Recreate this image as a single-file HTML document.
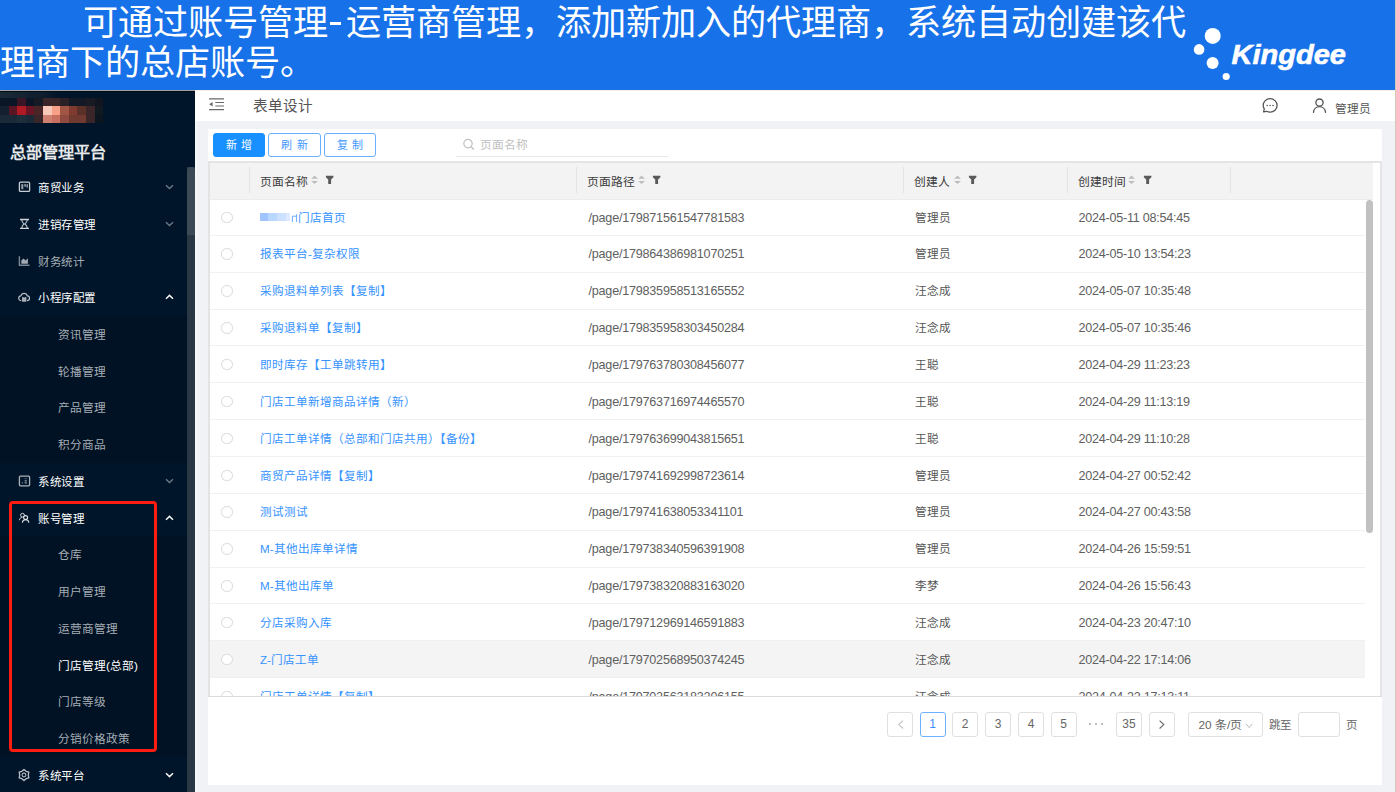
<!DOCTYPE html>
<html lang="zh-CN">
<head>
<meta charset="utf-8">
<style>
*{margin:0;padding:0;box-sizing:border-box}
html,body{width:1396px;height:792px;overflow:hidden;background:#f0f2f5;font-family:"Liberation Sans",sans-serif}
.a{position:absolute}
#banner{position:absolute;left:0;top:0;width:1396px;height:90px;background:#1771e9;overflow:hidden}
.ttl{position:absolute;color:#fff;font-family:"Liberation Serif",serif;font-size:35.2px;line-height:40px;white-space:nowrap}
.hy{display:inline-block;width:17.6px;text-align:left}
#side{position:absolute;left:0;top:90px;width:195px;height:702px;background:#001529;overflow:hidden}
#topbar{position:absolute;left:195px;top:90px;width:1200px;height:31px;background:#fff}
#card{position:absolute;left:208px;top:129px;width:1174px;height:656px;background:#fff}
#redge{position:absolute;left:1395px;top:0;width:1px;height:792px;background:#cfcbb8}
.btn{position:absolute;top:133.3px;height:24px;border-radius:3px;font-size:11px;line-height:23px;text-align:center;letter-spacing:4.5px;text-indent:4.5px}
.mi{position:absolute;left:0;width:187px;height:0;color:#fff;font-size:11.5px}
.mi .t{position:absolute;left:38px;top:-16.9px;line-height:36.75px;white-space:nowrap;letter-spacing:0.5px}
.mi.g .t{color:#a6adb4}
.mi.sub .t{left:58px;color:#a6adb4;top:-17.2px;font-size:11.7px;letter-spacing:0}
.mi.sel .t{color:#fff}
.mi svg{position:absolute}
.subbg{position:absolute;left:0;width:187px;background:#001224}
.th{position:absolute;top:163.5px;height:37px;line-height:37px;font-size:11.8px;color:#3a3a3a;white-space:nowrap}
.row{position:absolute;left:0;width:1155px;height:36.86px;border-bottom:1px solid #f0f0f0}
.c{position:absolute;top:0;line-height:36px;font-size:11.6px;white-space:nowrap;color:#555}
.num{font-size:12.6px;color:#606060}
.lk{color:#3592ff}
.rd{position:absolute;top:12.5px;width:11.5px;height:11.5px;border:1px solid #d9d9d9;border-radius:50%;background:#fff}
.pg{position:absolute;top:711.5px;height:25px;width:26px;border:1px solid #e0e0e0;border-radius:3px;text-align:center;line-height:23.5px;font-size:12px;color:#666;background:#fff}
</style>
</head>
<body>
<div id="banner">
  <div class="ttl" style="left:83px;top:3.7px">可通过账号管理<span class="hy"><span style="display:inline-block;width:10.8px;height:3.6px;background:#fff;vertical-align:9.3px;margin-left:2px"></span></span>运营商管理，添加新加入的代理商，系统自动创建该代</div>
  <div class="ttl" style="left:0;top:43.7px">理商下的总店账号。</div>
  <svg class="a" style="left:1180px;top:20px" width="200" height="66" viewBox="1180 20 200 66">
    <circle cx="1212.7" cy="35.9" r="8" fill="#fff"/><circle cx="1199.1" cy="49.4" r="5.3" fill="#fff"/><circle cx="1212.6" cy="63" r="6" fill="#fff"/><circle cx="1226.2" cy="76.5" r="3.6" fill="#fff"/>
    <text x="1231.5" y="63.6" font-family="Liberation Sans" font-weight="bold" font-style="italic" font-size="27.4" fill="#fff" stroke="#fff" stroke-width="0.6" textLength="114.5" lengthAdjust="spacingAndGlyphs">Kingdee</text>
  </svg>
</div>

<div id="side">
<div class="subbg" style="top:225.6px;height:147px"></div>
<div class="subbg" style="top:446.1px;height:220.5px"></div>
<div class="mi" style="top:97.00px"><div class="t">商贸业务</div><svg width="13" height="12" viewBox="0 0 13 12" style="left:18px;top:-6px"><rect x="1.4" y="1.2" width="10.2" height="9.2" rx="1" fill="none" stroke="#c8ccd2" stroke-width="1.3"/><rect x="3.3" y="3.2" width="2" height="5" fill="#9aa3ad"/><rect x="6.5" y="3.2" width="1.1" height="2.4" fill="#e8eaec"/><rect x="8.6" y="3.2" width="1.1" height="3.4" fill="#c8ccd2"/></svg><svg width="9" height="6" viewBox="0 0 9 6" style="left:164.5px;top:-3px"><path d="M1 1.2L4.5 4.6L8 1.2" fill="none" stroke="#6b7886" stroke-width="1.4"/></svg></div>
<div class="mi" style="top:133.75px"><div class="t">进销存管理</div><svg width="13" height="12" viewBox="0 0 13 12" style="left:18px;top:-5.75px"><path d="M2 1.5H11M2 10.4H11" stroke="#d0d4da" stroke-width="1.3"/><path d="M3.7 1.5Q3.9 4.6 6.1 6Q3.9 7.4 3.7 10.4M9.3 1.5Q9.1 4.6 6.9 6Q9.1 7.4 9.3 10.4M5.6 6H7.4" fill="none" stroke="#c4c9d0" stroke-width="1.1"/></svg><svg width="9" height="6" viewBox="0 0 9 6" style="left:164.5px;top:-3px"><path d="M1 1.2L4.5 4.6L8 1.2" fill="none" stroke="#6b7886" stroke-width="1.4"/></svg></div>
<div class="mi g" style="top:170.50px"><div class="t">财务统计</div><svg width="13" height="12" viewBox="0 0 13 12" style="left:18px;top:-6px"><path d="M1.4 1.2V10.3H11.5" fill="none" stroke="#7d8894" stroke-width="1.4"/><path d="M3.3 8.8V5.6L5.6 3.6L7.6 5.4L9.9 3.2V8.8Z" fill="#a3aab3"/></svg></div>
<div class="mi" style="top:207.25px"><div class="t">小程序配置</div><svg width="15" height="12" viewBox="0 0 15 12" style="left:17.4px;top:-6px"><path transform="translate(7.15 6.6) scale(0.88 0.9) translate(-7.15 -5.6)" d="M3.9 8.9C2.2 8.9 1 7.7 1 6.2C1 4.8 2.1 3.7 3.5 3.6C3.9 1.9 5.4 0.8 7.1 0.8C8.8 0.8 10.3 1.9 10.7 3.6C12.1 3.7 13.3 4.8 13.3 6.2C13.3 7.7 12.1 8.9 10.4 8.9" fill="none" stroke="#b8bec6" stroke-width="1.35"/><rect x="5" y="6" width="4.4" height="4.7" rx="0.6" fill="#a6adb5"/><rect x="6.6" y="6" width="1.2" height="0.9" fill="#3a4654"/></svg><svg width="9" height="6" viewBox="0 0 9 6" style="left:164.5px;top:-3px"><path d="M1 4.8L4.5 1.4L8 4.8" fill="none" stroke="#f2f4f6" stroke-width="1.5"/></svg></div>
<div class="mi sub" style="top:244.00px"><div class="t">资讯管理</div></div>
<div class="mi sub" style="top:280.75px"><div class="t">轮播管理</div></div>
<div class="mi sub" style="top:317.50px"><div class="t">产品管理</div></div>
<div class="mi sub" style="top:354.25px"><div class="t">积分商品</div></div>
<div class="mi" style="top:391.00px"><div class="t">系统设置</div><svg width="13" height="12" viewBox="0 0 13 12" style="left:18px;top:-6px"><rect x="1.4" y="1.2" width="10.2" height="9.6" rx="1" fill="none" stroke="#aab1b9" stroke-width="1.3"/><rect x="6.6" y="3.2" width="2.2" height="1" fill="#58626e"/><rect x="6.6" y="5.3" width="2.2" height="1.1" fill="#a0a8b0"/><rect x="6.6" y="7.3" width="2.2" height="1.1" fill="#a0a8b0"/><circle cx="4.3" cy="7.8" r="0.6" fill="#a0a8b0"/></svg><svg width="9" height="6" viewBox="0 0 9 6" style="left:164.5px;top:-3px"><path d="M1 1.2L4.5 4.6L8 1.2" fill="none" stroke="#6b7886" stroke-width="1.4"/></svg></div>
<div class="mi" style="top:427.75px"><div class="t">账号管理</div><svg width="13" height="12" viewBox="0 0 13 12" style="left:18px;top:-6px"><circle cx="4.5" cy="3.2" r="1.9" fill="none" stroke="#d0d4da" stroke-width="1"/><path d="M1.3 8.2C1.5 6.6 2.6 5.6 3.8 5.4" fill="none" stroke="#d0d4da" stroke-width="1"/><circle cx="7.6" cy="5.6" r="2" fill="none" stroke="#e0e3e7" stroke-width="1.1"/><path d="M4.3 10.6C4.6 8.8 5.9 7.8 7.6 7.8C9.3 7.8 10.6 8.8 10.9 10.6" fill="none" stroke="#e0e3e7" stroke-width="1.1"/></svg><svg width="9" height="6" viewBox="0 0 9 6" style="left:164.5px;top:-3px"><path d="M1 4.8L4.5 1.4L8 4.8" fill="none" stroke="#f2f4f6" stroke-width="1.5"/></svg></div>
<div class="mi sub" style="top:464.50px"><div class="t">仓库</div></div>
<div class="mi sub" style="top:501.25px"><div class="t">用户管理</div></div>
<div class="mi sub" style="top:538.00px"><div class="t">运营商管理</div></div>
<div class="mi sub sel" style="top:574.75px"><div class="t">门店管理(总部)</div></div>
<div class="mi sub" style="top:611.50px"><div class="t">门店等级</div></div>
<div class="mi sub" style="top:648.25px"><div class="t">分销价格政策</div></div>
<div class="mi" style="top:685.00px"><div class="t">系统平台</div><svg width="14" height="14" viewBox="0 0 14 14" style="left:17.4px;top:-7.2px"><path d="M7.00 1.40 L9.15 3.28 L11.85 4.20 L11.30 7.00 L11.85 9.80 L9.15 10.72 L7.00 12.60 L4.85 10.72 L2.15 9.80 L2.70 7.00 L2.15 4.20 L4.85 3.28Z" fill="none" stroke="#b8bec6" stroke-width="1.3" stroke-linejoin="round"/><circle cx="7" cy="7" r="1.9" fill="none" stroke="#aab1b9" stroke-width="1.1"/></svg><svg width="9" height="6" viewBox="0 0 9 6" style="left:164.5px;top:-3px"><path d="M1 1.2L4.5 4.6L8 1.2" fill="none" stroke="#f2f4f6" stroke-width="1.5"/></svg></div>
<div class="a" style="left:0;top:1px;width:60px;height:7px;background:linear-gradient(90deg,#1a2a38,#0e1e2e 70%,#001529)"></div>
<svg class="a" style="left:0;top:8px" width="104" height="25" viewBox="0 0 104 25" shape-rendering="crispEdges"><rect x="0.0" y="0" width="8.6" height="8.3" fill="#0a1525"/><rect x="8.6" y="0" width="8.6" height="8.3" fill="#0a1525"/><rect x="17.2" y="0" width="8.6" height="8.3" fill="#3a1525"/><rect x="25.8" y="0" width="8.6" height="8.3" fill="#0a1525"/><rect x="34.4" y="0" width="8.6" height="8.3" fill="#161a25"/><rect x="43.0" y="0" width="8.6" height="8.3" fill="#3a2528"/><rect x="51.6" y="0" width="8.6" height="8.3" fill="#3a2528"/><rect x="60.2" y="0" width="8.6" height="8.3" fill="#2a2025"/><rect x="68.8" y="0" width="8.6" height="8.3" fill="#141a25"/><rect x="77.4" y="0" width="8.6" height="8.3" fill="#141a25"/><rect x="86.0" y="0" width="8.6" height="8.3" fill="#1a1a25"/><rect x="94.6" y="0" width="8.6" height="8.3" fill="#10151f"/><rect x="0.0" y="8.3" width="8.6" height="8.4" fill="#142030"/><rect x="8.6" y="8.3" width="8.6" height="8.4" fill="#5a1525"/><rect x="17.2" y="8.3" width="8.6" height="8.4" fill="#b01a25"/><rect x="25.8" y="8.3" width="8.6" height="8.4" fill="#6a1525"/><rect x="34.4" y="8.3" width="8.6" height="8.4" fill="#4a2528"/><rect x="43.0" y="8.3" width="8.6" height="8.4" fill="#f8c8b8"/><rect x="51.6" y="8.3" width="8.6" height="8.4" fill="#f8a088"/><rect x="60.2" y="8.3" width="8.6" height="8.4" fill="#a05545"/><rect x="68.8" y="8.3" width="8.6" height="8.4" fill="#803a30"/><rect x="77.4" y="8.3" width="8.6" height="8.4" fill="#5a3028"/><rect x="86.0" y="8.3" width="8.6" height="8.4" fill="#3a2528"/><rect x="94.6" y="8.3" width="8.6" height="8.4" fill="#101820"/><rect x="0.0" y="16.7" width="8.6" height="8.3" fill="#1a2a38"/><rect x="8.6" y="16.7" width="8.6" height="8.3" fill="#1a2a38"/><rect x="17.2" y="16.7" width="8.6" height="8.3" fill="#1e2e3a"/><rect x="25.8" y="16.7" width="8.6" height="8.3" fill="#1a2a38"/><rect x="34.4" y="16.7" width="8.6" height="8.3" fill="#3a2528"/><rect x="43.0" y="16.7" width="8.6" height="8.3" fill="#d08070"/><rect x="51.6" y="16.7" width="8.6" height="8.3" fill="#c87060"/><rect x="60.2" y="16.7" width="8.6" height="8.3" fill="#904a40"/><rect x="68.8" y="16.7" width="8.6" height="8.3" fill="#703a30"/><rect x="77.4" y="16.7" width="8.6" height="8.3" fill="#703a30"/><rect x="86.0" y="16.7" width="8.6" height="8.3" fill="#3a2528"/><rect x="94.6" y="16.7" width="8.6" height="8.3" fill="#0a1520"/></svg>
<div class="a" style="left:9.5px;top:51.3px;font-size:16.2px;letter-spacing:0.15px;font-weight:bold;color:#e6e8ea;line-height:22px;white-space:nowrap">总部管理平台</div>
<div class="a" style="left:187px;top:77px;width:8px;height:625px;background:#2a3846"></div>
<div class="a" style="left:187px;top:77px;width:8px;height:68px;background:#3c4a58;border-radius:4px 4px 0 0"></div>
<div class="a" style="left:9px;top:410.5px;width:148px;height:251px;border:3px solid #ff1c10;border-radius:4px"></div>
<div class="a" style="left:0;top:0;width:195px;height:1px;background:#a0a3a2"></div>
<div class="a" style="left:0;top:1px;width:195px;height:1px;background:#000a18"></div>
</div>
<div class="a" style="left:195px;top:91px;width:2px;height:701px;background:#f6f7f9"></div>
<div id="topbar"></div>
<div class="a" style="left:195px;top:90px;width:1200px;height:1px;background:#f3efe4"></div>
<svg class="a" style="left:208px;top:97px" width="17" height="14" viewBox="0 0 17 14"><path d="M1 1.9H16M7.3 5.5H16M7.3 9H16M1 12.6H16" stroke="#6a6a6a" stroke-width="1.2"/><path d="M1.2 7.2L4.6 5V9.4Z" fill="#6a6a6a"/></svg>
<div class="a" style="left:253px;top:95px;font-size:14.6px;line-height:22px;color:#555;white-space:nowrap">表单设计</div>
<svg class="a" style="left:1261px;top:97px" width="19" height="18" viewBox="0 0 19 18"><path d="M2.6 14.8L3.3 11.8C2.6 10.8 2.2 9.6 2.2 8.4C2.2 4.6 5.3 1.7 9.1 1.7C12.9 1.7 16.1 4.6 16.1 8.4C16.1 12.2 12.9 15.2 9.1 15.2C7.8 15.2 6.6 14.9 5.6 14.3Z" fill="none" stroke="#555" stroke-width="1.3" stroke-linejoin="round"/><circle cx="6.2" cy="8.5" r="0.8" fill="#555"/><circle cx="9.1" cy="8.5" r="0.8" fill="#555"/><circle cx="12" cy="8.5" r="0.8" fill="#555"/></svg>
<svg class="a" style="left:1311px;top:97px" width="17" height="17" viewBox="0 0 17 17"><circle cx="8.5" cy="5.6" r="3.6" fill="none" stroke="#555" stroke-width="1.3"/><path d="M2.5 15.4C2.8 12 5.4 9.7 8.5 9.7C11.6 9.7 14.2 12 14.5 15.4" fill="none" stroke="#555" stroke-width="1.3" stroke-linecap="round"/></svg>
<div class="a" style="left:1334.5px;top:99px;font-size:11.6px;line-height:20px;color:#555;white-space:nowrap">管理员</div>

<div id="card"></div>
<div class="btn" style="left:213px;width:52px;background:#1890ff;color:#fff;border:1px solid #1890ff">新增</div>
<div class="btn" style="left:268px;width:53px;background:#fff;color:#3f97ff;border:1px solid #69b1ff">刷新</div>
<div class="btn" style="left:324px;width:52px;background:#fff;color:#3f97ff;border:1px solid #69b1ff">复制</div>
<svg class="a" style="left:462px;top:138px" width="14" height="13" viewBox="0 0 14 13"><circle cx="6" cy="5.6" r="4.2" fill="none" stroke="#bfbfbf" stroke-width="1.2"/><path d="M9 8.7L11.8 11.5" stroke="#bfbfbf" stroke-width="1.3"/></svg>
<div class="a" style="left:480.3px;top:135px;font-size:11.8px;line-height:20px;color:#c0c0c0;white-space:nowrap">页面名称</div>
<div class="a" style="left:456px;top:156px;width:212px;height:1px;background:#e8e8e8"></div>

<div class="a" style="left:208px;top:161px;width:1174px;height:2px;background:#e4e4e4"></div>
<div class="a" style="left:208px;top:161px;width:2px;height:536px;background:#e4e4e4"></div>
<div class="a" style="left:1380px;top:161px;width:1.5px;height:536px;background:#e4e4e4"></div>
<div class="a" style="left:210px;top:163px;width:1163px;height:36px;background:#f3f3f3"></div>
<div class="a" style="left:210px;top:198.5px;width:1163px;height:1px;background:#ececec"></div>
<div class="a" style="left:249px;top:167px;width:1px;height:26px;background:#e3e3e3"></div>
<div class="a" style="left:576px;top:167px;width:1px;height:26px;background:#e3e3e3"></div>
<div class="a" style="left:903px;top:167px;width:1px;height:26px;background:#e3e3e3"></div>
<div class="a" style="left:1067px;top:167px;width:1px;height:26px;background:#e3e3e3"></div>
<div class="a" style="left:1230px;top:167px;width:1px;height:26px;background:#e3e3e3"></div>
<div class="th" style="left:260px">页面名称</div><svg class="a" style="left:311px;top:175px" width="8" height="10" viewBox="0 0 8 10"><path d="M0.2 3.7L3.5 0.4L6.9 3.7Z" fill="#bdbdbd"/><path d="M0.2 5.9L3.5 9L6.9 5.9Z" fill="#bdbdbd"/></svg><svg class="a" style="left:325px;top:175px" width="9" height="10" viewBox="0 0 9 10"><path d="M0.9 0.8H8.4V2.2L6.1 4.6V8.6Q6.1 9.1 5.6 9.1H3.7Q3.2 9.1 3.2 8.6V4.6L0.9 2.2Z" fill="#5a5a5a"/></svg>
<div class="th" style="left:587px">页面路径</div><svg class="a" style="left:638px;top:175px" width="8" height="10" viewBox="0 0 8 10"><path d="M0.2 3.7L3.5 0.4L6.9 3.7Z" fill="#bdbdbd"/><path d="M0.2 5.9L3.5 9L6.9 5.9Z" fill="#bdbdbd"/></svg><svg class="a" style="left:652px;top:175px" width="9" height="10" viewBox="0 0 9 10"><path d="M0.9 0.8H8.4V2.2L6.1 4.6V8.6Q6.1 9.1 5.6 9.1H3.7Q3.2 9.1 3.2 8.6V4.6L0.9 2.2Z" fill="#5a5a5a"/></svg>
<div class="th" style="left:914px">创建人</div><svg class="a" style="left:954px;top:175px" width="8" height="10" viewBox="0 0 8 10"><path d="M0.2 3.7L3.5 0.4L6.9 3.7Z" fill="#bdbdbd"/><path d="M0.2 5.9L3.5 9L6.9 5.9Z" fill="#bdbdbd"/></svg><svg class="a" style="left:968px;top:175px" width="9" height="10" viewBox="0 0 9 10"><path d="M0.9 0.8H8.4V2.2L6.1 4.6V8.6Q6.1 9.1 5.6 9.1H3.7Q3.2 9.1 3.2 8.6V4.6L0.9 2.2Z" fill="#5a5a5a"/></svg>
<div class="th" style="left:1078px">创建时间</div><svg class="a" style="left:1128px;top:175px" width="8" height="10" viewBox="0 0 8 10"><path d="M0.2 3.7L3.5 0.4L6.9 3.7Z" fill="#bdbdbd"/><path d="M0.2 5.9L3.5 9L6.9 5.9Z" fill="#bdbdbd"/></svg><svg class="a" style="left:1143px;top:175px" width="9" height="10" viewBox="0 0 9 10"><path d="M0.9 0.8H8.4V2.2L6.1 4.6V8.6Q6.1 9.1 5.6 9.1H3.7Q3.2 9.1 3.2 8.6V4.6L0.9 2.2Z" fill="#5a5a5a"/></svg>
<div class="a" style="left:210px;top:199px;width:1170px;height:497px;overflow:hidden">
<div class="row" style="top:0.00px;"><div class="rd" style="left:11px"></div><div class="c lk" style="left:50px;top:0.5px"><span style="display:inline-block;width:8px;height:8px;background:#a0c4ff;vertical-align:0.5px"></span><span style="display:inline-block;width:9px;height:8px;background:#b8d8ff;vertical-align:0.5px"></span><span style="display:inline-block;width:9px;height:8px;background:#cce0ff;vertical-align:0.5px"></span><span style="display:inline-block;width:4px;height:8px;background:#ddeaff;vertical-align:0.5px"></span><svg width="7" height="12" viewBox="0 0 7 12" style="vertical-align:-1.5px;margin-left:0.5px"><path d="M1.4 5.2V11M5.6 3.2V11M1 5.2H6" fill="none" stroke="#6aaeff" stroke-width="1"/></svg>门店首页</div><div class="c num" style="left:378.5px;top:0.5px;letter-spacing:-0.22px">/page/179871561547781583</div><div class="c" style="left:704.5px;top:0.5px">管理员</div><div class="c num" style="left:868.5px;top:0.5px;letter-spacing:-0.25px">2024-05-11 08:54:45</div></div>
<div class="row" style="top:36.86px;"><div class="rd" style="left:11px"></div><div class="c lk" style="left:50px;top:0.5px">报表平台-复杂权限</div><div class="c num" style="left:378.5px;top:0.5px;letter-spacing:-0.22px">/page/179864386981070251</div><div class="c" style="left:704.5px;top:0.5px">管理员</div><div class="c num" style="left:868.5px;top:0.5px;letter-spacing:-0.25px">2024-05-10 13:54:23</div></div>
<div class="row" style="top:73.72px;"><div class="rd" style="left:11px"></div><div class="c lk" style="left:50px;top:0.5px">采购退料单列表【复制】</div><div class="c num" style="left:378.5px;top:0.5px;letter-spacing:-0.22px">/page/179835958513165552</div><div class="c" style="left:704.5px;top:0.5px">汪念成</div><div class="c num" style="left:868.5px;top:0.5px;letter-spacing:-0.25px">2024-05-07 10:35:48</div></div>
<div class="row" style="top:110.58px;"><div class="rd" style="left:11px"></div><div class="c lk" style="left:50px;top:0.5px">采购退料单【复制】</div><div class="c num" style="left:378.5px;top:0.5px;letter-spacing:-0.22px">/page/179835958303450284</div><div class="c" style="left:704.5px;top:0.5px">汪念成</div><div class="c num" style="left:868.5px;top:0.5px;letter-spacing:-0.25px">2024-05-07 10:35:46</div></div>
<div class="row" style="top:147.44px;"><div class="rd" style="left:11px"></div><div class="c lk" style="left:50px;top:0.5px">即时库存【工单跳转用】</div><div class="c num" style="left:378.5px;top:0.5px;letter-spacing:-0.22px">/page/179763780308456077</div><div class="c" style="left:704.5px;top:0.5px">王聪</div><div class="c num" style="left:868.5px;top:0.5px;letter-spacing:-0.25px">2024-04-29 11:23:23</div></div>
<div class="row" style="top:184.30px;"><div class="rd" style="left:11px"></div><div class="c lk" style="left:50px;top:0.5px">门店工单新增商品详情（新）</div><div class="c num" style="left:378.5px;top:0.5px;letter-spacing:-0.22px">/page/179763716974465570</div><div class="c" style="left:704.5px;top:0.5px">王聪</div><div class="c num" style="left:868.5px;top:0.5px;letter-spacing:-0.25px">2024-04-29 11:13:19</div></div>
<div class="row" style="top:221.16px;"><div class="rd" style="left:11px"></div><div class="c lk" style="left:50px;top:0.5px">门店工单详情（总部和门店共用）【备份】</div><div class="c num" style="left:378.5px;top:0.5px;letter-spacing:-0.22px">/page/179763699043815651</div><div class="c" style="left:704.5px;top:0.5px">王聪</div><div class="c num" style="left:868.5px;top:0.5px;letter-spacing:-0.25px">2024-04-29 11:10:28</div></div>
<div class="row" style="top:258.02px;"><div class="rd" style="left:11px"></div><div class="c lk" style="left:50px;top:0.5px">商贸产品详情【复制】</div><div class="c num" style="left:378.5px;top:0.5px;letter-spacing:-0.22px">/page/179741692998723614</div><div class="c" style="left:704.5px;top:0.5px">管理员</div><div class="c num" style="left:868.5px;top:0.5px;letter-spacing:-0.25px">2024-04-27 00:52:42</div></div>
<div class="row" style="top:294.88px;"><div class="rd" style="left:11px"></div><div class="c lk" style="left:50px;top:0.5px">测试测试</div><div class="c num" style="left:378.5px;top:0.5px;letter-spacing:-0.22px">/page/179741638053341101</div><div class="c" style="left:704.5px;top:0.5px">管理员</div><div class="c num" style="left:868.5px;top:0.5px;letter-spacing:-0.25px">2024-04-27 00:43:58</div></div>
<div class="row" style="top:331.74px;"><div class="rd" style="left:11px"></div><div class="c lk" style="left:50px;top:0.5px">M-其他出库单详情</div><div class="c num" style="left:378.5px;top:0.5px;letter-spacing:-0.22px">/page/179738340596391908</div><div class="c" style="left:704.5px;top:0.5px">管理员</div><div class="c num" style="left:868.5px;top:0.5px;letter-spacing:-0.25px">2024-04-26 15:59:51</div></div>
<div class="row" style="top:368.60px;"><div class="rd" style="left:11px"></div><div class="c lk" style="left:50px;top:0.5px">M-其他出库单</div><div class="c num" style="left:378.5px;top:0.5px;letter-spacing:-0.22px">/page/179738320883163020</div><div class="c" style="left:704.5px;top:0.5px">李梦</div><div class="c num" style="left:868.5px;top:0.5px;letter-spacing:-0.25px">2024-04-26 15:56:43</div></div>
<div class="row" style="top:405.46px;"><div class="rd" style="left:11px"></div><div class="c lk" style="left:50px;top:0.5px">分店采购入库</div><div class="c num" style="left:378.5px;top:0.5px;letter-spacing:-0.22px">/page/179712969146591883</div><div class="c" style="left:704.5px;top:0.5px">汪念成</div><div class="c num" style="left:868.5px;top:0.5px;letter-spacing:-0.25px">2024-04-23 20:47:10</div></div>
<div class="row" style="top:442.32px;background:#f4f4f4;"><div class="rd" style="left:11px"></div><div class="c lk" style="left:50px;top:0.5px">Z-门店工单</div><div class="c num" style="left:378.5px;top:0.5px;letter-spacing:-0.22px">/page/179702568950374245</div><div class="c" style="left:704.5px;top:0.5px">汪念成</div><div class="c num" style="left:868.5px;top:0.5px;letter-spacing:-0.25px">2024-04-22 17:14:06</div></div>
<div class="row" style="top:479.18px;"><div class="rd" style="left:11px"></div><div class="c lk" style="left:50px;top:0.5px">门店工单详情【复制】</div><div class="c num" style="left:378.5px;top:0.5px;letter-spacing:-0.22px">/page/179702563183206155</div><div class="c" style="left:704.5px;top:0.5px">汪念成</div><div class="c num" style="left:868.5px;top:0.5px;letter-spacing:-0.25px">2024-04-22 17:13:11</div></div>
</div>
<div class="a" style="left:1365.5px;top:199.5px;width:7.5px;height:333.5px;background:#c1c1c1;border-radius:4px"></div>
<div class="a" style="left:208px;top:696px;width:1173.5px;height:1px;background:#dcdcdc"></div>
<div class="pg" style="left:887px"><svg width="8" height="10" viewBox="0 0 8 10" style="position:absolute;left:8.5px;top:7.5px"><path d="M6 0.7L1.8 4.6L6 8.5" fill="none" stroke="#c4c4c4" stroke-width="1.1"/></svg></div>
<div class="pg" style="left:919.5px;border:1.5px solid #6cb2ff;color:#3d8bff;line-height:22.5px">1</div>
<div class="pg" style="left:952px">2</div>
<div class="pg" style="left:985px">3</div>
<div class="pg" style="left:1018px">4</div>
<div class="pg" style="left:1050.5px">5</div>
<div class="a" style="left:1089.2px;top:722.5px;width:2.2px;height:2.2px;border-radius:50%;background:#a8a8a8"></div>
<div class="a" style="left:1095.0px;top:722.5px;width:2.2px;height:2.2px;border-radius:50%;background:#a8a8a8"></div>
<div class="a" style="left:1100.8px;top:722.5px;width:2.2px;height:2.2px;border-radius:50%;background:#a8a8a8"></div>
<div class="pg" style="left:1116px">35</div>
<div class="pg" style="left:1149px"><svg width="8" height="10" viewBox="0 0 8 10" style="position:absolute;left:8px;top:7.5px"><path d="M1.6 0.7L5.8 4.6L1.6 8.5" fill="none" stroke="#666" stroke-width="1.1"/></svg></div>
<div class="pg" style="left:1188px;width:75px;text-align:left;padding-left:9.5px;font-size:11.8px;line-height:24.5px">20 条/页<svg width="9" height="6" viewBox="0 0 9 6" style="position:absolute;left:55.5px;top:10px"><path d="M1 0.8L4.2 4.6L7.4 0.8" fill="none" stroke="#b0b0b0" stroke-width="0.9"/></svg></div>
<div class="a" style="left:1268.5px;top:715px;font-size:11.5px;line-height:20px;color:#666">跳至</div>
<div class="pg" style="left:1298px;width:42px"></div>
<div class="a" style="left:1345.5px;top:715px;font-size:11.5px;line-height:20px;color:#666">页</div>
<div id="redge"></div>
</body>
</html>
